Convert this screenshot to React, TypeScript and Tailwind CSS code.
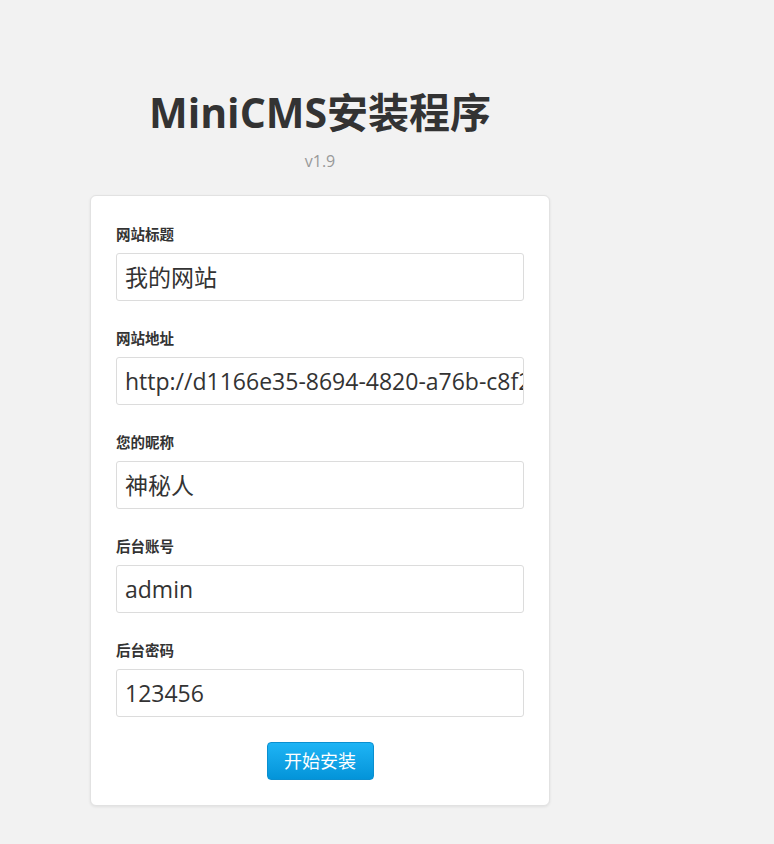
import React from "react";

const fields = [
  { label: "网站标题", value: "我的网站" },
  { label: "网站地址", value: "http://d1166e35-8694-4820-a76b-c8f2e1a3b4d5.example.com/" },
  { label: "您的昵称", value: "神秘人" },
  { label: "后台账号", value: "admin" },
  { label: "后台密码", value: "123456" },
];

export default function App() {
  const font = { fontFamily: '"Open Sans", "Noto Sans CJK SC", sans-serif' };
  return (
    <div className="min-h-[844px] bg-[#f2f2f2] text-[#333]" style={font}>
      <div className="ml-[90px] w-[460px] pt-[85px]">
        <h1 className="text-center text-[41px] font-bold leading-[54px] text-[#333]">MiniCMS安装程序</h1>
        <div className="mt-[11px] text-center text-[16px] leading-[22px] text-[#999]">v1.9</div>
        <div className="mt-[23px] flex flex-col gap-[29px] rounded-[6px] border border-[#e2e2e2] bg-white px-[25px] pt-[30px] pb-[25px] shadow-[0_1px_3px_rgba(0,0,0,0.08)]">
          {fields.map((f) => (
            <div key={f.label}>
              <div className="text-[14.5px] font-bold leading-[18px] text-[#333]">{f.label}</div>
              <div className="mt-[9px] flex h-[48px] items-center overflow-hidden whitespace-nowrap rounded-[3px] border border-[#dcdcdc] bg-white pl-[8px] pr-[6px] text-[23px] text-[#333]">
                {f.value}
              </div>
            </div>
          ))}
          <div className="-mt-[4px] flex justify-center">
            <button className="h-[38px] w-[107px] rounded-[4px] border border-[#0a8fd0] bg-gradient-to-b from-[#1db4f5] to-[#0394d9] text-[18px] text-white">
              开始安装
            </button>
          </div>
        </div>
      </div>
    </div>
  );
}
